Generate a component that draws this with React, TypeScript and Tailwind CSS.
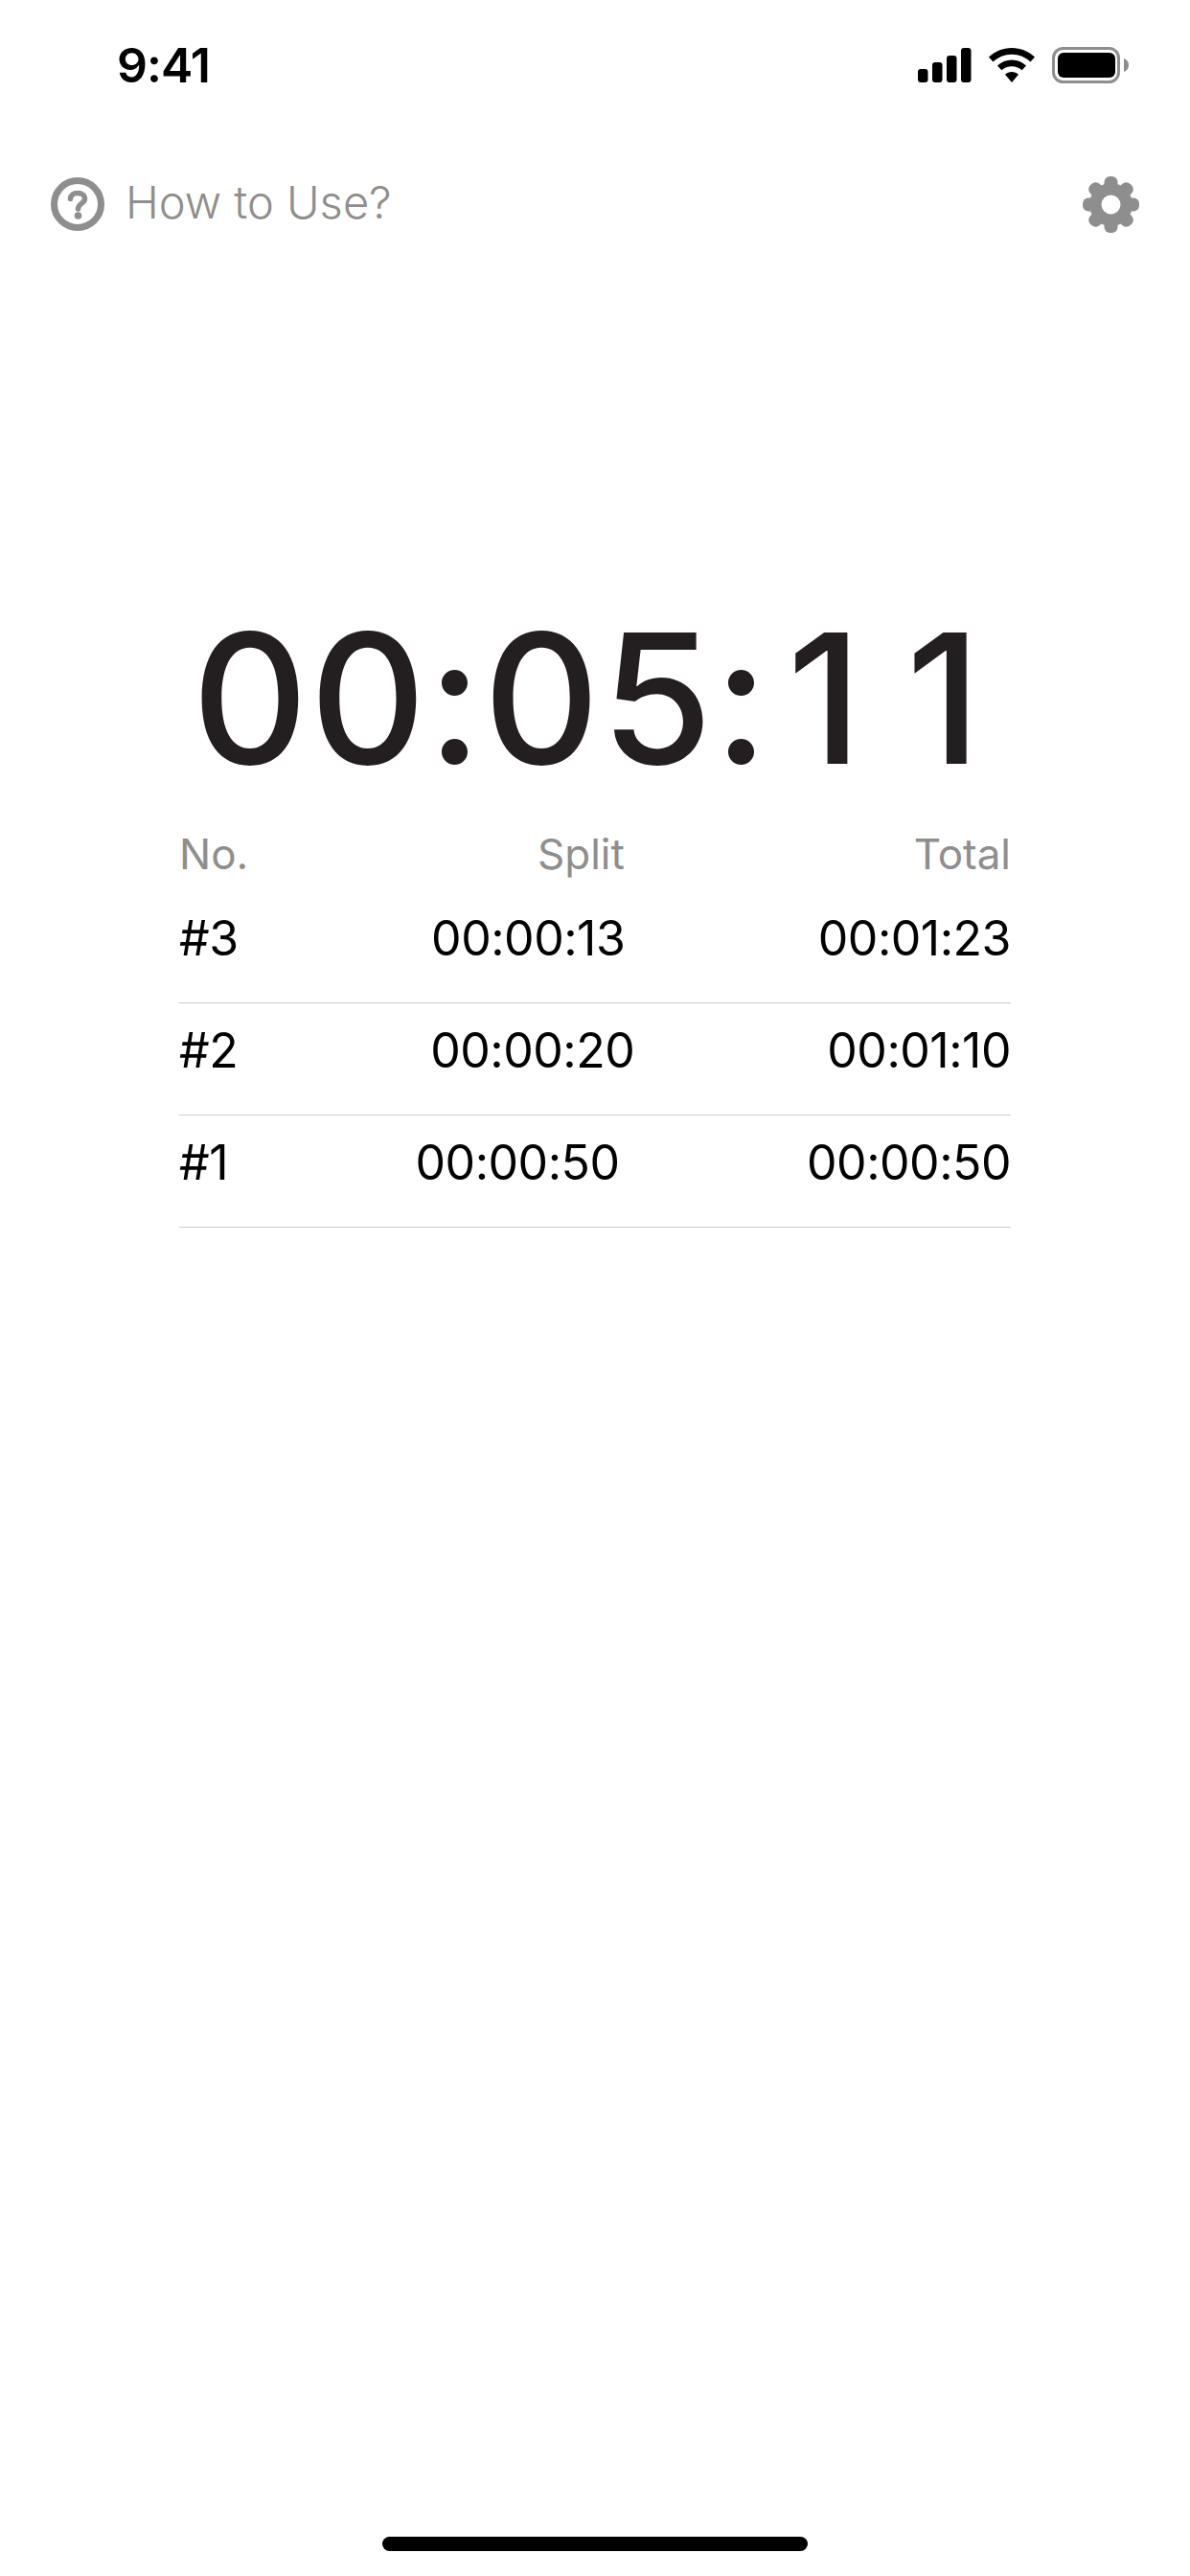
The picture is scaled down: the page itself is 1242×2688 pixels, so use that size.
const gearTeeth = [0, 45, 90, 135, 180, 225, 270, 315]

function SignalIcon() {
  return (
    <svg width="56" height="36" viewBox="0 0 56 36" fill="#000">
      <rect x="0" y="22" width="10.5" height="14" rx="3" />
      <rect x="15" y="15" width="10.5" height="21" rx="3" />
      <rect x="30" y="8" width="10.5" height="28" rx="3" />
      <rect x="45" y="0" width="10.5" height="36" rx="3" />
    </svg>
  )
}

function WifiIcon() {
  return (
    <svg width="48" height="36" viewBox="0 0 48 36" fill="#000">
      <path d="M24 0C33.500 0 41.500 3.600 48 9.500L43.500 14.600C38.200 9.800 31.500 6.800 24 6.800C16.500 6.800 9.800 9.800 4.500 14.600L0 9.500C6.500 3.600 14.500 0 24 0Z" />
      <path d="M24 12.500C29.800 12.500 34.800 14.700 39 18.400L34.600 23.300C31.600 20.700 28 19.200 24 19.200C20 19.200 16.400 20.700 13.400 23.300L9 18.400C13.200 14.700 18.200 12.500 24 12.500Z" />
      <path d="M24 25C26.800 25 29 26 31 27.800L24 36L17 27.800C19 26 21.200 25 24 25Z" />
    </svg>
  )
}

function BatteryIcon() {
  return (
    <svg width="80" height="38" viewBox="0 0 80 38">
      <rect x="1.500" y="1.500" width="68" height="35" rx="10" fill="none" stroke="#8e8e8e" strokeWidth="3" />
      <rect x="6" y="6" width="60" height="26" rx="6" fill="#000" />
      <path d="M75 12C77.800 13 80 15.500 80 19C80 22.500 77.800 25 75 26Z" fill="#8e8e8e" />
    </svg>
  )
}

function HelpIcon() {
  return (
    <svg width="56" height="56" viewBox="0 0 56 56" fill="none">
      <circle cx="28" cy="28" r="24.500" stroke="#8e8e8e" strokeWidth="7" />
      <path
        d="M20.500 22.500C20.800 18.500 23.800 16.500 28 16.500C32.300 16.500 35.500 18.800 35.500 22.500C35.500 27 28.500 27.500 28.500 33"
        stroke="#8e8e8e"
        strokeWidth="5.500"
        strokeLinecap="round"
      />
      <circle cx="28.500" cy="40" r="3.800" fill="#8e8e8e" />
    </svg>
  )
}

function GearIcon() {
  return (
    <svg width="59" height="59" viewBox="0 0 59 59" fill="#8e8e8e">
      {gearTeeth.map((angle) => (
        <rect key={angle} x="22.500" y="0" width="14" height="16" rx="6" transform={`rotate(${angle} 29.500 29.500)`} />
      ))}
      <circle cx="29.500" cy="29.500" r="22.500" />
      <circle cx="29.500" cy="29.500" r="10" fill="#fff" />
    </svg>
  )
}

const laps = [
  { no: '#3', split: '00:00:13', total: '00:01:23' },
  { no: '#2', split: '00:00:20', total: '00:01:10' },
  { no: '#1', split: '00:00:50', total: '00:00:50' },
]

export default function App() {
  return (
    <div className="w-[1242px] h-[2688px] bg-white flex flex-col font-['Inter',sans-serif]">
      {/* status bar */}
      <div className="h-[49px] mt-[43px] pl-[122px] pr-[64px] flex items-center justify-between">
        <span className="text-[50px] leading-none font-semibold text-black tracking-[-1px]">9:41</span>
        <div className="flex items-center gap-[18px]">
          <SignalIcon />
          <WifiIcon />
          <BatteryIcon />
        </div>
      </div>

      {/* header */}
      <div className="mt-[93px] px-[53px] h-[56px] flex items-center justify-between">
        <div className="flex items-center gap-[22px]">
          <HelpIcon />
          <span className="text-[47px] leading-none font-light text-[#8e8e8e] pb-[6px]">How to Use?</span>
        </div>
        <GearIcon />
      </div>

      {/* timer */}
      <div className="mt-[373px] pr-[18px] text-center text-[188px] leading-[230px] font-medium tracking-[1.5px] text-[#231f20]">
        00:05:<span className="ml-[18px] tracking-[46px] mr-[-46px]">11</span>
      </div>

      {/* laps */}
      <div className="mx-[187px] mt-[20px]">
        <div className="flex justify-between text-[44px] leading-[54px] pb-[12px] text-[#8e8e8e]">
          <span>No.</span>
          <span>Split</span>
          <span>Total</span>
        </div>
        {laps.map((lap) => (
          <div key={lap.no} className="h-[117px] pb-[18px] flex items-center justify-between border-b border-[#cccccc] text-[50px] tracking-[-0.5px] text-black">
            <span>{lap.no}</span>
            <span>{lap.split}</span>
            <span>{lap.total}</span>
          </div>
        ))}
      </div>

      {/* home indicator */}
      <div className="mt-auto mb-[26px] mx-auto w-[444px] h-[15px] rounded-full bg-black" />
    </div>
  )
}
